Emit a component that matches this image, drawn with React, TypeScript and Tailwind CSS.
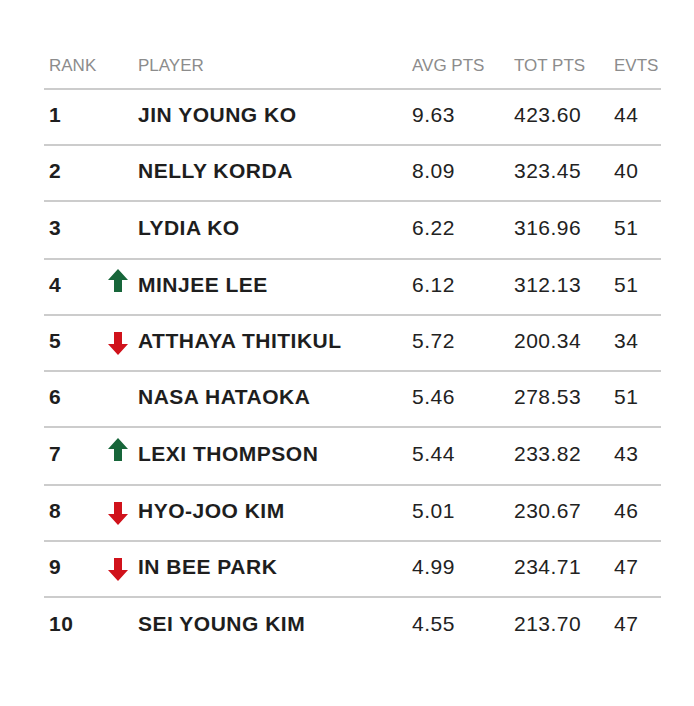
const players = [
  { rank: 1, name: 'JIN YOUNG KO', avg: '9.63', tot: '423.60', evts: 44, move: null, tall: false },
  { rank: 2, name: 'NELLY KORDA', avg: '8.09', tot: '323.45', evts: 40, move: null, tall: false },
  { rank: 3, name: 'LYDIA KO', avg: '6.22', tot: '316.96', evts: 51, move: null, tall: true },
  { rank: 4, name: 'MINJEE LEE', avg: '6.12', tot: '312.13', evts: 51, move: 'up', tall: false },
  { rank: 5, name: 'ATTHAYA THITIKUL', avg: '5.72', tot: '200.34', evts: 34, move: 'down', tall: false },
  { rank: 6, name: 'NASA HATAOKA', avg: '5.46', tot: '278.53', evts: 51, move: null, tall: false },
  { rank: 7, name: 'LEXI THOMPSON', avg: '5.44', tot: '233.82', evts: 43, move: 'up', tall: true },
  { rank: 8, name: 'HYO-JOO KIM', avg: '5.01', tot: '230.67', evts: 46, move: 'down', tall: false },
  { rank: 9, name: 'IN BEE PARK', avg: '4.99', tot: '234.71', evts: 47, move: 'down', tall: false },
  { rank: 10, name: 'SEI YOUNG KIM', avg: '4.55', tot: '213.70', evts: 47, move: null, tall: false },
]

function UpArrow() {
  return (
    <svg className="mb-[10px]" width="20" height="23" viewBox="0 0 20 23">
      <path d="M10 0 L20 11 L14 11 L14 23 L6 23 L6 11 L0 11 Z" fill="#17663a" />
    </svg>
  )
}

function DownArrow() {
  return (
    <svg className="mt-[4px]" width="20" height="23" viewBox="0 0 20 23">
      <path d="M6 0 L14 0 L14 12 L20 12 L10 23 L0 12 L6 12 Z" fill="#d0121b" />
    </svg>
  )
}

export default function App() {
  return (
    <div className="min-h-screen bg-white px-[44px] pt-[44px] font-['Liberation_Sans',Arial,sans-serif] text-[#222]">
      <div className="w-[617px]">
        <div className="flex h-[46px] items-center border-b-2 border-[#cccccc] pl-[5px] text-[17px] text-[#8c8c8c]">
          <div className="w-[89px]">RANK</div>
          <div className="w-[274px]">PLAYER</div>
          <div className="w-[102px]">AVG PTS</div>
          <div className="w-[100px]">TOT PTS</div>
          <div>EVTS</div>
        </div>
        {players.map((p, i) => (
          <div
            key={p.rank}
            className={`flex items-center pb-[4px] pl-[5px] text-[21px] tracking-[0.5px] ${p.tall ? 'h-[58px]' : 'h-[56px]'} ${
              i < players.length - 1 ? 'border-b-2 border-[#cccccc]' : ''
            }`}
          >
            <div className="w-[59px] font-bold text-[#1e1e1e]">{p.rank}</div>
            <div className="flex w-[30px] items-center">
              {p.move === 'up' && <UpArrow />}
              {p.move === 'down' && <DownArrow />}
            </div>
            <div className="w-[274px] font-bold text-[#1e1e1e]">{p.name}</div>
            <div className="w-[102px]">{p.avg}</div>
            <div className="w-[100px]">{p.tot}</div>
            <div>{p.evts}</div>
          </div>
        ))}
      </div>
    </div>
  )
}
